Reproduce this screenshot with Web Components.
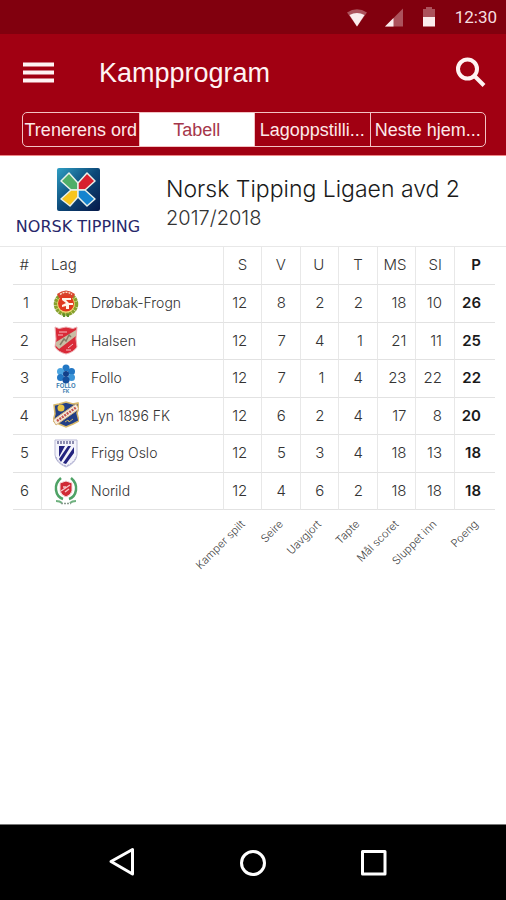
<!DOCTYPE html>
<html lang="no">
<head>
<meta charset="utf-8">
<meta name="viewport" content="width=device-width, initial-scale=1">
<title>Kampprogram</title>
<style>
    body {
        margin: 0;
        min-height: 100vh;
        display: flex;
        flex-direction: column;
        background: #fff;
        color: #333;
        font-family: Inter, Roboto, "Liberation Sans", sans-serif;
    }

    main {
        flex: 1;
    }
</style>
</head>
<body>
    <status-bar>12:30</status-bar>
    <app-header>
        Kampprogram
        <tab-strip slot="tabs">
            <tab-item>Trenerens ord</tab-item>
            <tab-item selected>Tabell</tab-item>
            <tab-item>Lagoppstilli...</tab-item>
            <tab-item>Neste hjem...</tab-item>
        </tab-strip>
    </app-header>
    <main>
        <league-header>
            <sponsor-logo slot="logo">NORSK TIPPING</sponsor-logo>
            Norsk Tipping Ligaen avd 2
            <span slot="season">2017/2018</span>
        </league-header>
        <league-table></league-table>
    </main>
    <system-nav></system-nav>

<script>
class StatusBar extends HTMLElement {
    connectedCallback() {
        this.attachShadow({ mode: 'open' });
        this.shadowRoot.innerHTML = `
            <style>
                :host {
                    display: flex;
                    align-items: center;
                    justify-content: flex-end;
                    height: 34px;
                    padding: 0 9px 0 0;
                    background: #81000e;
                    color: #f6dfe0;
                    font: 17px/20px Roboto, sans-serif;
                }

                svg {
                    width: 20px;
                    height: 20px;
                    margin-right: 16px;
                    fill: #fbeced;
                }
            </style>
            <svg viewBox="0 0 20 20">
                <path d="M0 5.500Q10-1 20 5.500L10 19.500Z" opacity=".35"/>
                <path d="M2.500 8Q10 4.200 17.500 8L10 19.500Z"/>
            </svg>
            <svg viewBox="0 0 20 20">
                <path d="M20 1.500V19.500H2Z" opacity=".35"/>
                <path d="M10.500 11V19.500H2Z"/>
            </svg>
            <svg viewBox="0 0 20 20">
                <path d="M7 0h6v2h3v8H4V2h3z" opacity=".35"/>
                <path d="M4 10h12v9.500H4z"/>
            </svg>
            <time><slot></slot></time>
        `;
    }
}

class AppHeader extends HTMLElement {
    connectedCallback() {
        this.attachShadow({ mode: 'open' });
        this.shadowRoot.innerHTML = `
            <style>
                :host {
                    display: block;
                    padding: 20px 20px 8px 22px;
                    background: #a10012;
                    border-bottom: 1px solid #e88;
                    color: #fff3f3;
                }

                .bar {
                    display: flex;
                    align-items: center;
                    height: 38px;
                    margin-bottom: 20px;
                }

                h1 {
                    flex: 1;
                    margin: 0 0 0 45px;
                    font: 27px/36px "Liberation Sans", sans-serif;
                }

                button {
                    display: flex;
                    padding: 0;
                    border: 0;
                    background: none;
                }

                svg {
                    width: 32px;
                    height: 32px;
                    fill: none;
                    stroke: #fff3f3;
                    stroke-width: 4;
                }
            </style>
            <div class="bar">
                <button aria-label="Meny">
                    <svg viewBox="0 0 32 32"><path d="M1 7.500h31M1 15.500h31M1 23.500h31"/></svg>
                </button>
                <h1><slot></slot></h1>
                <button aria-label="Søk">
                    <svg viewBox="0 0 32 32"><circle cx="13.500" cy="12" r="9.500"/><path d="M20 18.500L30 28.500"/></svg>
                </button>
            </div>
            <slot name="tabs"></slot>
        `;
    }
}

class TabStrip extends HTMLElement {
    connectedCallback() {
        this.attachShadow({ mode: 'open' });
        this.shadowRoot.innerHTML = `
            <style>
                :host {
                    display: grid;
                    grid-auto-flow: column;
                    grid-auto-columns: minmax(0, 1fr);
                    height: 33px;
                    border: 1px solid #f3c3c4;
                    border-radius: 5px;
                    overflow: hidden;
                }

                ::slotted(tab-item:not(:first-child)) {
                    border-left: 1px solid #f3c3c4;
                }
            </style>
            <slot></slot>
        `;
    }
}

class TabItem extends HTMLElement {
    connectedCallback() {
        this.attachShadow({ mode: 'open' });
        this.shadowRoot.innerHTML = `
            <style>
                :host {
                    display: flex;
                }

                button {
                    flex: 1;
                    padding: 0;
                    border: 0;
                    background: none;
                    color: #fde9e9;
                    font: 18px/32px "Liberation Sans", sans-serif;
                    white-space: nowrap;
                }

                :host([selected]) button {
                    background: #fff;
                    color: #a5364a;
                }
            </style>
            <button><slot></slot></button>
        `;
    }
}

class SponsorLogo extends HTMLElement {
    connectedCallback() {
        this.attachShadow({ mode: 'open' });
        this.shadowRoot.innerHTML = `
            <style>
                :host {
                    display: flex;
                    flex-direction: column;
                    align-items: center;
                    gap: 6px;
                    color: #27276a;
                    font: 16px/20px "DejaVu Sans", sans-serif;
                    white-space: nowrap;
                }

                svg {
                    width: 44px;
                    height: 44px;
                }
            </style>
            <svg viewBox="0 0 44 44">
                <defs>
                    <linearGradient id="bg" x1="0" y1="0" x2="1" y2="1">
                        <stop offset="0" stop-color="#2f9fc4"/>
                        <stop offset=".5" stop-color="#0c4878"/>
                        <stop offset="1" stop-color="#071a4a"/>
                    </linearGradient>
                </defs>
                <rect x="1" y="1" width="43" height="43" rx="2" fill="url(#bg)"/>
                <g stroke="#e9f1ea" stroke-width="1.500" stroke-linejoin="round">
                    <path d="M22 23H15L5 14l8-8 9 10z" fill="#4fae68"/>
                    <path d="M22 23V16L31 6l8 8-10 9z" fill="#d81f2e"/>
                    <path d="M22 23v7l-8 9-9-7 10-9z" fill="#f7c51e"/>
                    <path d="M22 23h7l10 9-8 7-9-9z" fill="#1584cf"/>
                </g>
            </svg>
            <slot></slot>
        `;
    }
}

class LeagueHeader extends HTMLElement {
    connectedCallback() {
        this.attachShadow({ mode: 'open' });
        this.shadowRoot.innerHTML = `
            <style>
                :host {
                    display: flex;
                    align-items: flex-start;
                    gap: 24px;
                    padding: 11px 14px 9px;
                    border-bottom: 1px solid #e8e8e8;
                }

                .logo {
                    width: 128px;
                }

                .text {
                    padding-top: 6px;
                }

                h2 {
                    margin: 0;
                    color: #1a1a1a;
                    font-size: 23px;
                    line-height: 32px;
                    font-weight: 300;
                }

                p {
                    margin: 0;
                    font-size: 20px;
                    line-height: 26px;
                    font-weight: 300;
                }
            </style>
            <div class="logo"><slot name="logo"></slot></div>
            <div class="text">
                <h2><slot></slot></h2>
                <p><slot name="season"></slot></p>
            </div>
        `;
    }
}

const CRESTS = {
    drobak: `
        <circle cx="13" cy="15" r="10.500" fill="#f4dd7a" stroke="#86a12c" stroke-width="3.500" stroke-dasharray="3 .5"/>
        <path d="M4 5Q13-2 22 5L20 9H6z" fill="#d8442c"/>
        <path d="M7 5.500Q13 1 19 5.500" fill="none" stroke="#fbe3c8" stroke-width="1.500" stroke-dasharray="2 1"/>
        <circle cx="13" cy="14.500" r="8" fill="#e03a1e"/>
        <path d="M9 9h9v2h-5l3 3h4v2h-4v4h-3v-3l-4 1v-2l4-2-4-3z" fill="#fff6e8"/>
        <path d="M10 24l3 2 3-2v4h-2v-2h-2v2h-2z" fill="#5e8f2a"/>`,
    halsen: `
        <path d="M2 1l4 1.500L13 1l7 1.500L24 1l-1 12 1 8q-3 5-11 7Q5 26 2 21l1-8z" fill="#d92a38" stroke="#eeb0b4"/>
        <path d="M23 4v6L6 23l-3-3v-4z" fill="#c9bda4"/>
        <path d="M7 19l4-6 2 2 3-6 2 2" fill="none" stroke="#857c67" stroke-width="1.500"/>
        <path d="M6 6h8M5 9h5M15 22l5-4M13 24h5" stroke="#f5bcc0"/>`,
    follo: `
        <g fill="#2277c4">
            <circle cx="13" cy="4" r="3.500"/>
            <circle cx="7.500" cy="7.500" r="3.500" fill="#4ba4e0"/>
            <circle cx="18.500" cy="7.500" r="3.500"/>
            <circle cx="7.500" cy="13.500" r="3.500"/>
            <circle cx="18.500" cy="13.500" r="3.500" fill="#3b95d8"/>
            <circle cx="13" cy="16" r="3.500" fill="#164f9c"/>
            <circle cx="13" cy="10" r="3" fill="#12408a"/>
        </g>
        <text x="13" y="24" font-size="6" font-weight="700" text-anchor="middle" fill="#3b7cae">FOLLO</text>
        <text x="13" y="29" font-size="5" font-weight="700" text-anchor="middle" fill="#3b7cae">FK</text>`,
    lyn: `
        <path d="M1 4l5-1 7-2 7 2 5-1 1 5-2 5 2 8-6 3-7 3-7-3-6-3 2-7z" fill="#233f86" stroke="#d9b96a" stroke-width="1.500"/>
        <circle cx="8" cy="7" r="3.500" fill="#e9c447"/>
        <path d="M0 19L23 3l3 5L3 24z" fill="#f5ece0" stroke="#d8b57b"/>
        <path d="M4 20L23 6.500" stroke="#c4544c" stroke-width="2.500" stroke-dasharray="2 1"/>
        <path d="M12 21l3-2 1 2 4-3" fill="none" stroke="#c9b269"/>`,
    frigg: `
        <path d="M2 1h22v15q-1 8-11 12Q3 24 2 16z" fill="#f4f4fb" stroke="#b9b9d6"/>
        <path d="M4 3.500h18" stroke="#8c8cb0" stroke-width="3" stroke-dasharray="2 1"/>
        <path d="M6 7h6L6 18zM15 7h3L8 23l-2-3zM21 8v6l-8 11-3-1z" fill="#23237f"/>
        <path d="M3 18q2 6 10 9 8-3 10-9" fill="none" stroke="#a3a3cb" stroke-dasharray="2 1"/>`,
    norild: `
        <path d="M8 2Q2 7 3 14t7 9M18 2q6 5 5 12t-7 9" fill="none" stroke="#4fa266" stroke-width="2.500"/>
        <path d="M7 7l6-2 6 2v8q-1 4-6 6-5-2-6-6z" fill="#d02a35" stroke="#f3dada"/>
        <path d="M8 15l9-6M10 11h3M12 16l4-3" stroke="#f6c4c6" stroke-width="1.500"/>
        <path d="M3 25q4 0 6 2M23 25q-4 0-6 2" fill="none" stroke="#6fb27f" stroke-width="2"/>
        <path d="M8 27.500h10" stroke="#8a9a8f" stroke-width="1.500" stroke-dasharray="2 1"/>`
};

class TeamCrest extends HTMLElement {
    connectedCallback() {
        this.attachShadow({ mode: 'open' });
        this.shadowRoot.innerHTML = `
            <style>
                :host {
                    display: flex;
                }

                svg {
                    width: 26px;
                    height: 29px;
                }
            </style>
            <svg viewBox="0 0 26 29">${CRESTS[this.getAttribute('club')]}</svg>
        `;
    }
}

const TEAMS = [
    ['drobak', 'Drøbak-Frogn', 12, 8, 2, 2, 18, 10, 26],
    ['halsen', 'Halsen', 12, 7, 4, 1, 21, 11, 25],
    ['follo', 'Follo', 12, 7, 1, 4, 23, 22, 22],
    ['lyn', 'Lyn 1896 FK', 12, 6, 2, 4, 17, 8, 20],
    ['frigg', 'Frigg Oslo', 12, 5, 3, 4, 18, 13, 18],
    ['norild', 'Norild', 12, 4, 6, 2, 18, 18, 18]
];

const COLUMNS = [
    ['S', 'Kamper spilt'],
    ['V', 'Seire'],
    ['U', 'Uavgjort'],
    ['T', 'Tapte'],
    ['MS', 'Mål scoret'],
    ['SI', 'Sluppet inn'],
    ['P', 'Poeng']
];

class LeagueTable extends HTMLElement {
    connectedCallback() {
        const rows = TEAMS.map(([club, name, ...stats], i) => `
            <tr>
                <td>${i + 1}</td>
                <td><div class="team"><team-crest club="${club}"></team-crest>${name}</div></td>
                ${stats.map(n => `<td>${n}</td>`).join('')}
            </tr>`).join('');

        this.attachShadow({ mode: 'open' });
        this.shadowRoot.innerHTML = `
            <style>
                :host {
                    display: block;
                    padding: 0 11px 0 13px;
                }

                table {
                    width: 100%;
                    table-layout: fixed;
                    border-collapse: separate;
                    border-spacing: 0;
                    font-size: 15px;
                    line-height: 20px;
                    font-weight: 300;
                }

                th, td {
                    box-sizing: border-box;
                    height: 38px;
                    padding: 0 14px 1px 0;
                    border-bottom: 1px solid #e2e2e2;
                    border-left: 1px solid #e8e8e8;
                    text-align: right;
                    font-weight: 300;
                }

                tbody tr:nth-child(even) td {
                    height: 37px;
                }

                th:first-child, td:first-child {
                    padding-right: 12px;
                    border-left: 0;
                }

                th:nth-child(2), td:nth-child(2) {
                    padding-left: 9px;
                    text-align: left;
                }

                th:nth-child(7), td:nth-child(7) {
                    padding-right: 9px;
                }

                th:nth-child(8), td:nth-child(8) {
                    padding-right: 12px;
                }

                th:last-child, td:last-child {
                    color: #1a1a1a;
                    font-weight: 600;
                }

                .rank { width: 28px; }
                .num { width: 8%; }
                .points { width: 41px; }

                .team {
                    display: flex;
                    align-items: center;
                    gap: 12px;
                    padding-left: 2px;
                    font-size: 14px;
                }

                tfoot td:nth-child(n) {
                    height: 76px;
                    padding: 4px 19px 0 0;
                    border: 0;
                    color: #444;
                    font-size: 11px;
                    line-height: 16px;
                    font-weight: 300;
                    vertical-align: top;
                }

                .legend {
                    display: flex;
                    justify-content: flex-end;
                    white-space: nowrap;
                }

                .legend span {
                    transform: rotate(-45deg);
                    transform-origin: right center;
                }
            </style>
            <table>
                <colgroup>
                    <col class="rank"><col>
                    <col class="num" span="6">
                    <col class="points">
                </colgroup>
                <thead>
                    <tr><th>#</th><th>Lag</th>${COLUMNS.map(c => `<th>${c[0]}</th>`).join('')}</tr>
                </thead>
                <tbody>${rows}</tbody>
                <tfoot>
                    <tr>
                        <td></td><td></td>
                        ${COLUMNS.map(c => `<td><div class="legend"><span>${c[1]}</span></div></td>`).join('')}
                    </tr>
                </tfoot>
            </table>
        `;
    }
}

class SystemNav extends HTMLElement {
    connectedCallback() {
        this.attachShadow({ mode: 'open' });
        this.shadowRoot.innerHTML = `
            <style>
                :host {
                    display: flex;
                    align-items: center;
                    justify-content: center;
                    gap: 87px;
                    height: 75px;
                    border-top: 1px solid #777;
                    background: #000;
                }

                button {
                    display: flex;
                    padding: 0;
                    border: 0;
                    background: none;
                }

                svg {
                    width: 40px;
                    height: 40px;
                    fill: none;
                    stroke: #fff;
                    stroke-width: 3;
                    stroke-linejoin: round;
                }
            </style>
            <button aria-label="Tilbake"><svg viewBox="0 0 40 40"><path d="M5 18.500L26.500 6.500V31Z"/></svg></button>
            <button aria-label="Hjem"><svg viewBox="0 0 40 40"><circle cx="20" cy="20" r="11.500"/></svg></button>
            <button aria-label="Oversikt"><svg viewBox="0 0 40 40"><path d="M2.500 8.500h22.500v22.500h-22.500z"/></svg></button>
        `;
    }
}

customElements.define('status-bar', StatusBar);
customElements.define('app-header', AppHeader);
customElements.define('tab-strip', TabStrip);
customElements.define('tab-item', TabItem);
customElements.define('sponsor-logo', SponsorLogo);
customElements.define('league-header', LeagueHeader);
customElements.define('team-crest', TeamCrest);
customElements.define('league-table', LeagueTable);
customElements.define('system-nav', SystemNav);
</script>
</body>
</html>
